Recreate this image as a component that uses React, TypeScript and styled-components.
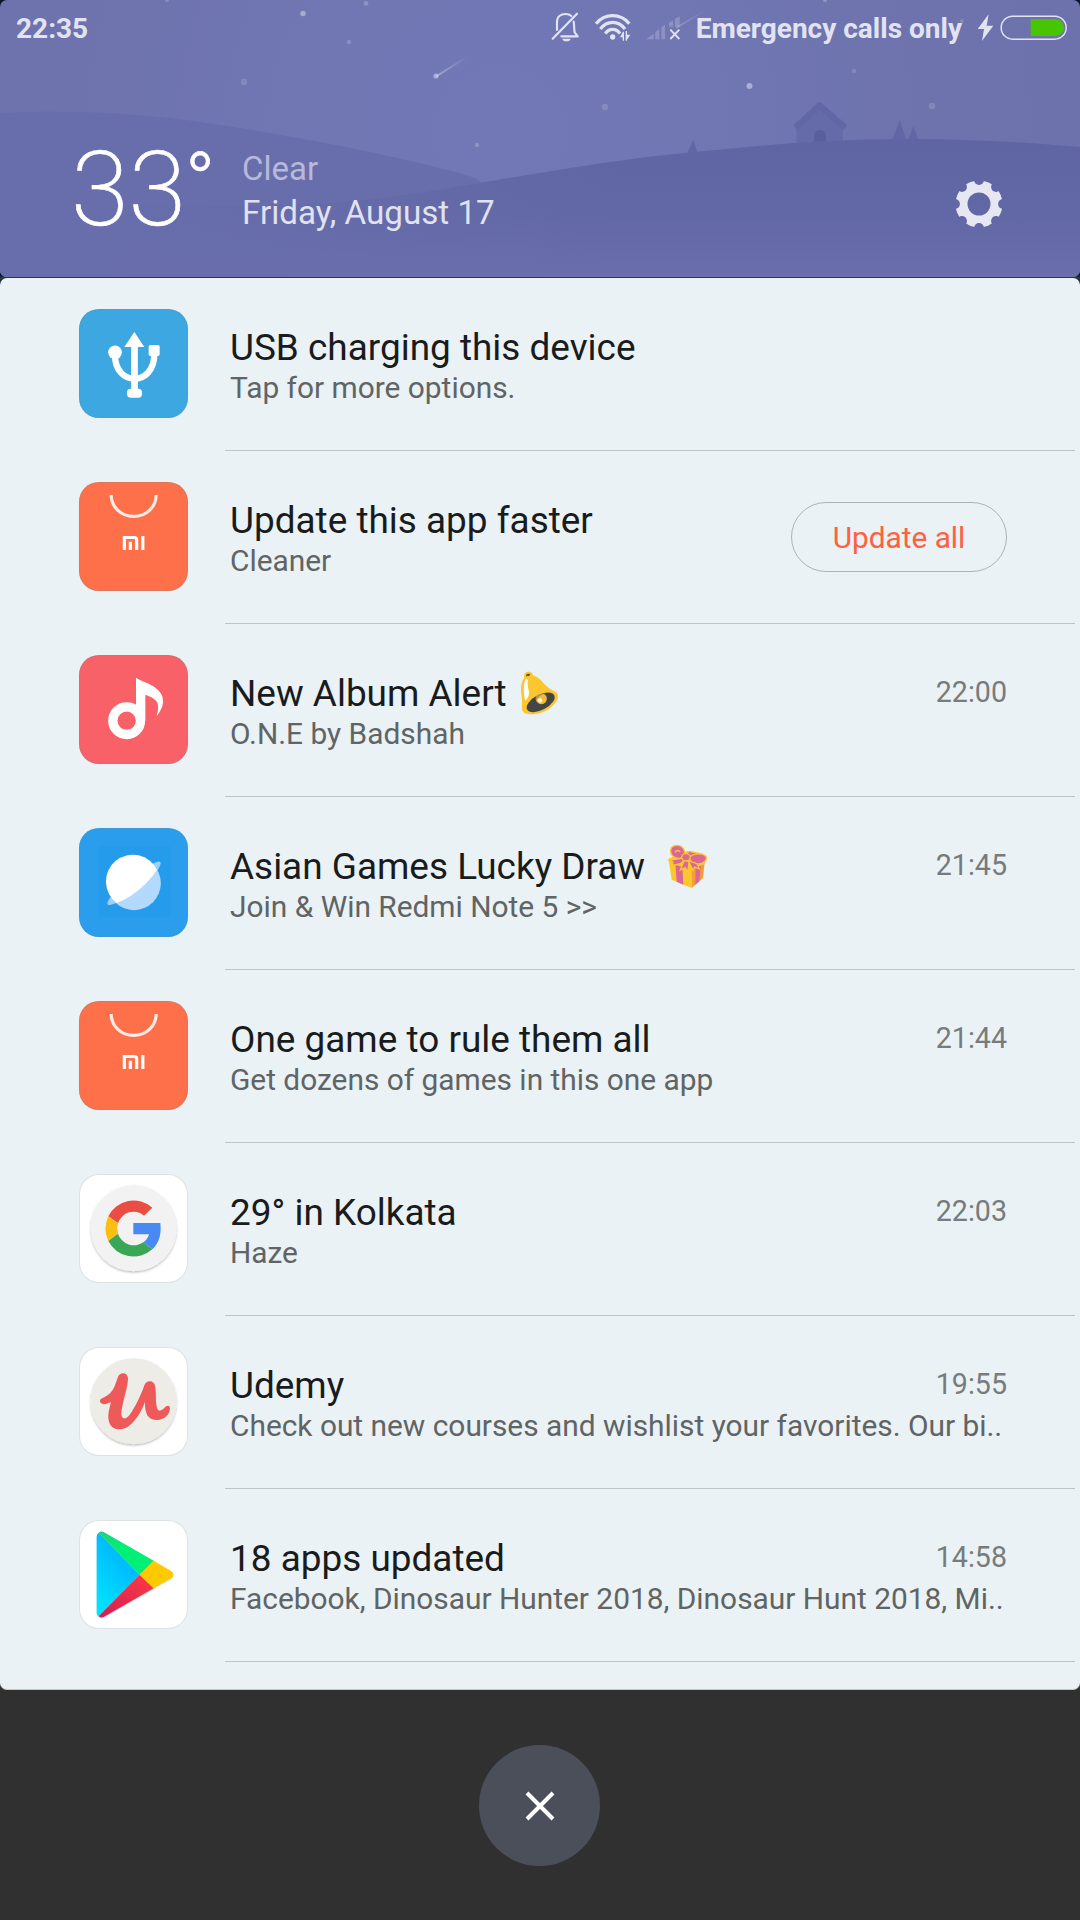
import React from "react";
import styled, { createGlobalStyle } from "styled-components";

const GlobalStyle = createGlobalStyle`
  * { box-sizing: border-box; }
  body {
    margin: 0;
    background: #303030;
    font-family: Roboto, "Liberation Sans", sans-serif;
  }
  svg { display: block; flex: none; }
`;

const Screen = styled.div`
  width: 1080px;
  height: 1920px;
  display: flex;
  flex-direction: column;
  overflow: hidden;
  background: #303030;
`;

const Shade = styled.div`
  flex: none;
  display: flex;
  flex-direction: column;
  gap: 1px;
  background: linear-gradient(#07152e 0, #07152e 276px, #2b3b48 277px, #07152e 288px, #303030 400px);
`;

const Header = styled.header`
  position: relative;
  height: 277px;
  border-radius: 7px;
  overflow: hidden;
  background: radial-gradient(circle at 500px 130px, #7278b6 0, #7077b3 180px, #6e73ad 420px, #6d72ac 100%);
`;

const SceneLayer = styled.svg`
  position: absolute;
  inset: 0;
`;

const StatusBar = styled.div`
  position: relative;
  display: flex;
  justify-content: space-between;
  height: 45px;
  padding: 12px 13px 0 16px;
`;

const StatusText = styled.span`
  font-size: 28px;
  font-weight: 700;
  line-height: 33px;
  color: #e2e3f0;
  white-space: nowrap;
`;

const StatusGroup = styled.div`
  display: flex;
  align-items: flex-start;
`;

const StatusGlyph = styled.svg<{ $after: number }>`
  margin-right: ${(p) => p.$after}px;
`;

const Operator = styled(StatusText)`
  margin-right: 15px;
`;

const Weather = styled.div`
  position: relative;
  display: flex;
  align-items: flex-start;
  height: 232px;
  padding: 0 77px 0 71px;
`;

const Temperature = styled.div`
  display: flex;
  align-items: flex-start;
  width: 171px;
  padding-top: 83px;
  color: #fff;
  font-size: 104.5px;
  font-weight: 200;
  line-height: 123px;
  -webkit-text-stroke: 0.6px #fff;
`;

const Degree = styled.span`
  margin: 7px 0 0 -1px;
  font-size: 80px;
  font-weight: 300;
  line-height: 94px;
`;

const Conditions = styled.div`
  display: flex;
  flex-direction: column;
  gap: 5px;
  padding-top: 104px;
  line-height: 39px;
  font-size: 33.2px;
`;

const Sky = styled.span`
  font-size: 33px;
  color: #b7b9da;
`;

const Today = styled.span`
  color: #e1e2f0;
`;

const SettingsButton = styled.button`
  margin: 135px 0 0 auto;
  padding: 0;
  border: 0;
  background: none;
`;

const List = styled.main`
  display: flex;
  flex-direction: column;
  height: 1412px;
  overflow: hidden;
  background: #eaf2f5;
  border-bottom: 1px solid #c3c7ca;
  border-radius: 7px;
`;

const Row = styled.article`
  flex: none;
  display: flex;
  align-items: flex-start;
  height: 172px;
  padding: 0 73px 0 79px;
`;

const Separator = styled.hr`
  flex: none;
  height: 1px;
  margin: 0 5px 0 225px;
  border: 0;
  background: #bcc2c5;
`;

const Tile = styled.div<{ $bg: string }>`
  flex: none;
  width: 109px;
  height: 109px;
  margin-top: 31px;
  border-radius: 20px;
  overflow: hidden;
  background: ${(p) => p.$bg};
  box-shadow: inset 0 0 0 1px rgba(120, 140, 150, 0.25);
`;

const Copy = styled.div`
  flex: 1;
  min-width: 0;
  display: flex;
  flex-direction: column;
  padding: 48px 0 0 42px;
`;

const TitleLine = styled.div`
  display: flex;
  justify-content: space-between;
  height: 44px;
`;

const Title = styled.h2`
  display: flex;
  margin: 0;
  font-size: 36.93px;
  font-weight: 400;
  line-height: 43px;
  color: #191b1c;
  white-space: nowrap;
`;

const Body = styled.p`
  margin: 0;
  font-size: 29.86px;
  line-height: 35px;
  color: #606465;
  white-space: nowrap;
`;

const Time = styled.time`
  padding-top: 3px;
  font-size: 28.6px;
  line-height: 34px;
  color: #777b7c;
`;

const Action = styled.button`
  flex: none;
  width: 216px;
  height: 70px;
  margin-top: 51px;
  padding: 0;
  border: 1px solid #adb2b5;
  border-radius: 35px;
  background: transparent;
  font: 400 29.8px/35px Roboto, "Liberation Sans", sans-serif;
  color: #ff6040;
`;

const EmojiArt = styled.svg<{ $gap: number }>`
  margin: -1px 0 0 ${(p) => p.$gap}px;
  overflow: visible;
`;

const Footer = styled.footer`
  flex: 1;
  display: flex;
  justify-content: center;
  padding: 55px 1px 0 0;
`;

const CloseButton = styled.button`
  display: flex;
  align-items: center;
  justify-content: center;
  width: 121px;
  height: 121px;
  padding: 0;
  border: 0;
  border-radius: 50%;
  background: #4b4f59;
`;

const stars: [number, number, number, number][] = [
  [303, 13.5, 2.8, 0.38],
  [366, 3.5, 2.4, 0.2],
  [349, 42, 2.2, 0.18],
  [244, 82, 3.2, 0.14],
  [477, 145, 2.2, 0.2],
  [167, 0, 2, 0.2],
  [605, 107, 3.2, 0.14],
  [749.5, 86, 3, 0.42],
  [854, 71, 2.2, 0.14],
  [932, 106, 3.2, 0.14],
  [962, 21, 2, 0.16],
  [825, 0, 2, 0.25],
];

function Scene() {
  return (
    <SceneLayer width="1080" height="277" viewBox="0 0 1080 277">
      <defs>
        <linearGradient id="front" x1="0" y1="139" x2="0" y2="277" gradientUnits="userSpaceOnUse">
          <stop offset="0" stopColor="#5f65a2" />
          <stop offset="0.55" stopColor="#6267a5" />
          <stop offset="1" stopColor="#6a6eac" />
        </linearGradient>
        <linearGradient id="frontFade" x1="0" y1="0" x2="620" y2="0" gradientUnits="userSpaceOnUse">
          <stop offset="0.15" stopColor="#686dab" />
          <stop offset="1" stopColor="#686dab" stopOpacity="0" />
        </linearGradient>
        <linearGradient id="tail" x1="437" y1="76" x2="467" y2="57" gradientUnits="userSpaceOnUse">
          <stop offset="0" stopColor="#fff" stopOpacity="0.35" />
          <stop offset="1" stopColor="#fff" stopOpacity="0" />
        </linearGradient>
        <linearGradient id="tail2" x1="677" y1="27" x2="705" y2="10" gradientUnits="userSpaceOnUse">
          <stop offset="0" stopColor="#fff" stopOpacity="0.22" />
          <stop offset="1" stopColor="#fff" stopOpacity="0" />
        </linearGradient>
      </defs>
      {stars.map(([x, y, r, o]) => (
        <circle key={`${x}-${y}`} cx={x} cy={y} r={r} fill="#fff" opacity={o} />
      ))}
      <path d="M436 76.500L467 57" stroke="url(#tail)" strokeWidth="2" />
      <circle cx="436" cy="76" r="2.600" fill="#fff" opacity="0.4" />
      <path d="M676 28L706 10" stroke="url(#tail2)" strokeWidth="2" />
      <path d="M0 113.500C60 109 140 113 200 122C300 137 400 156 472 177Q480 180 482 184L482 277H0Z" fill="#686dab" />
      <g fill="#6166a4">
        <path d="M687 153L693.500 140L697.500 153Z" />
        <path d="M892 140L900 120L906 140Z" />
        <path d="M908 140L913.500 126L918 140Z" />
        <path d="M796.500 144V127L820 108L843 127V144Z" fill="#656aa8" />
        <path d="M819.500 101.500L847 125L843.500 130L819.500 110L797 130L793.500 125Z" />
        <path d="M814 143V136Q814 130 820 130Q826 130 826 136V143Z" fill="#595f9d" />
      </g>
      <path
        d="M0 207C160 207 240 207 300 205C400 200 450 187 540 173C600 163 640 157 695 152C760 146 820 139 905 139C980 139 1030 143 1080 147V277H0Z"
        fill="url(#front)"
      />
      <path
        d="M0 207C160 207 240 207 300 205C400 200 450 187 540 173C570 168 595 164 620 161V277H0Z"
        fill="url(#frontFade)"
      />
    </SceneLayer>
  );
}

const INK = "#e2e3f0";

function BellOff() {
  return (
    <StatusGlyph $after={14} width="29" height="30" viewBox="33 36 87 90">
      <g fill="none" stroke={INK} strokeWidth="6.500" strokeLinecap="round" strokeLinejoin="round">
        <path d="M51 90V66C51 50 62 42 77 42C84 42 90 44 94 48" />
        <path d="M101 65C103 74 102 90 104 97L113 109H64" />
        <path d="M111 41L38 116" />
      </g>
      <path d="M67 116H92Q90 124 79.500 124Q69 124 67 116Z" fill={INK} />
    </StatusGlyph>
  );
}

function Wifi() {
  return (
    <StatusGlyph $after={13} width="38" height="30" viewBox="162 36 114 90">
      <g fill="none" stroke={INK} strokeWidth="9.500">
        <path d="M168 71Q188 47 218 47Q248 47 268 71" />
        <path d="M181 87Q196 67 218 67Q240 67 255 87" />
        <path d="M196 101Q204 88 218 88Q232 88 240 101" />
      </g>
      <circle cx="218" cy="111" r="8" fill={INK} />
      <path d="M240 112L249 95H252V122H248V112ZM257 93H261V104H271L261 119V122H257Z" fill={INK} />
    </StatusGlyph>
  );
}

function NoSignal() {
  return (
    <StatusGlyph $after={14.7} width="36" height="30" viewBox="315 36 108 90">
      <g fill="#fff" opacity="0.2">
        <path d="M318 118L341 101V118Z" />
        <path d="M346 96L358 87V118H346Z" />
        <path d="M364 82L375 74V118H364Z" />
        <path d="M387 68L399 61V80H387Z" />
        <path d="M405 56L419 49V80H405Z" />
      </g>
      <path d="M391 89L418 117M418 89L391 117" stroke={INK} strokeWidth="5.500" />
    </StatusGlyph>
  );
}

function Bolt() {
  return (
    <StatusGlyph $after={6} width="17" height="30" viewBox="501 36 51 90">
      <path d="M536 43L503 87H522L516 123L550 77H530Z" fill={INK} />
    </StatusGlyph>
  );
}

function Battery() {
  return (
    <StatusGlyph $after={0} width="67" height="30" viewBox="570 36 201 90">
      <rect x="573.500" y="48.500" width="195" height="69" rx="34.500" fill="none" stroke={INK} strokeWidth="4.500" />
      <path d="M662 57H738Q762 60 762 82.500Q762 105 738 108H662Z" fill="#48c400" />
    </StatusGlyph>
  );
}

function Gear() {
  const notches = Array.from({ length: 8 }, (_, i) => (i * Math.PI) / 4);
  return (
    <svg width="48" height="48" viewBox="-24 -24 48 48">
      <mask id="gearCut">
        <rect x="-24" y="-24" width="48" height="48" fill="#fff" />
        <circle r="11.500" fill="#000" />
        {notches.map((a) => (
          <circle key={a} cx={24 * Math.cos(a)} cy={24 * Math.sin(a)} r="4.900" fill="#000" />
        ))}
      </mask>
      <circle r="23.500" fill="#e6e7f2" mask="url(#gearCut)" />
    </svg>
  );
}

function UsbIcon() {
  return (
    <svg width="109" height="109" viewBox="57 57 327 327">
      <g fill="#fff">
        <path d="M223 126L253 171H193Z" />
        <rect x="213.500" y="165" width="20" height="140" />
        <rect x="201" y="296" width="45" height="27" rx="11" />
        <circle cx="165" cy="187" r="20.500" />
        <rect x="266" y="165" width="33" height="33" rx="5" />
      </g>
      <path d="M165 196C165 240 192 266 223 266C255 266 283 240 283 192" fill="none" stroke="#fff" strokeWidth="19" />
    </svg>
  );
}

function StoreIcon() {
  return (
    <svg width="109" height="109" viewBox="57 576 327 327">
      <path d="M153.500 615C154 652 184 679 221 679C258 679 288 652 288.500 615" fill="none" stroke="#ffece6" strokeWidth="9.500" />
      <g fill="none" stroke="#fff" strokeWidth="9.500">
        <path d="M193 780V742.500H222Q230 742.500 230 750V780" />
        <path d="M211 755V780M248.500 738V780" />
      </g>
    </svg>
  );
}

function MusicIcon() {
  return (
    <svg width="109" height="109" viewBox="57 44 327 327">
      <circle cx="200" cy="241" r="41.500" fill="none" stroke="#fff" strokeWidth="28" />
      <path
        d="M228 112C240 121 262 126 280 138C300 151 310 166 309 184C308 202 300 214 290 228C295 210 297 194 289 182C281 172 268 168 256 163V241H228Z"
        fill="#fff"
      />
    </svg>
  );
}

function BrowserIcon() {
  return (
    <svg width="109" height="109" viewBox="57 562 327 327">
      <rect x="114" y="616" width="216" height="212" fill="#1f9cec" opacity="0.4" />
      <path d="M276 670Q301 656 302 667Q301 678 290 692Z" fill="#9dcffb" />
      <path d="M154 766Q138 787 144 792Q153 796 172 785Z" fill="#9dcffb" />
      <circle cx="222" cy="728" r="80.500" fill="#b3dafe" />
      <path d="M291 688C265 726 222 768 170 787A80.500 80.500 0 1 1 291 688Z" fill="#fff" />
    </svg>
  );
}

function GoogleIcon() {
  return (
    <svg width="109" height="109" viewBox="57 582 327 327">
      <defs>
        <filter id="discShadow" x="-10%" y="-10%" width="120%" height="125%">
          <feDropShadow dx="0" dy="4" stdDeviation="2.500" floodColor="#000" floodOpacity="0.28" />
        </filter>
      </defs>
      <circle cx="221" cy="745" r="129" fill="#f2f2f2" filter="url(#discShadow)" />
      <path d="M145 709A85 86 0 0 1 277 683L252 707A49 51 0 0 0 174 730Z" fill="#ea4e43" />
      <path d="M145 709A85 86 0 0 0 145 783L174 761A50 50 0 0 1 174 730Z" fill="#fbbf14" />
      <path d="M145 783A85 86 0 0 0 277 808L250 787A50 51 0 0 1 174 761Z" fill="#3aa757" />
      <path d="M220 729H301Q307 780 277 808L250 787Q263 778 267 763H220Z" fill="#4889f4" />
    </svg>
  );
}

function UdemyIcon() {
  return (
    <svg width="109" height="109" viewBox="57 51 327 327">
      <circle cx="221" cy="214" r="129" fill="#edece7" filter="url(#discShadow)" />
      <path
        d="M120 211C124 202 142 203 158 180C166 167 170 150 174 140C179 126 204 124 204 147C203 175 185 225 184 250C184 270 198 269 208 256C225 234 245 190 252 169C257 148 284 149 286 171C289 191 286 215 291 233C294 245 305 243 313 234C320 226 329 224 330 235C330 254 312 270 291 270C265 270 254 253 255 215C246 243 228 269 209 286C191 303 156 303 148 278C141 258 148 236 153 217C143 219 136 225 128 222C122 220 119 216 120 211Z"
        fill="#ee5a59"
      />
    </svg>
  );
}

function PlayIcon() {
  return (
    <svg width="109" height="109" viewBox="57 570 327 327">
      <defs>
        <linearGradient id="playBlue" x1="0.8" y1="0" x2="0.2" y2="1">
          <stop offset="0" stopColor="#00a8ff" />
          <stop offset="1" stopColor="#00e4ff" />
        </linearGradient>
        <linearGradient id="playRed" x1="1" y1="0" x2="0" y2="1">
          <stop offset="0" stopColor="#ff3a44" />
          <stop offset="1" stopColor="#cf1f55" />
        </linearGradient>
        <linearGradient id="playGreen" x1="0" y1="0" x2="1" y2="1">
          <stop offset="0" stopColor="#1fd07f" />
          <stop offset="0.4" stopColor="#00f076" />
        </linearGradient>
        <filter id="playShadow">
          <feDropShadow dx="0" dy="2" stdDeviation="1.500" floodColor="#000" floodOpacity="0.25" />
        </filter>
      </defs>
      <g filter="url(#playShadow)">
        <path d="M116 608Q110 612 110 620V848Q110 856 116 859L239 734Z" fill="url(#playBlue)" />
        <path d="M116 608Q122 602 132 607L281 692L239 734Z" fill="url(#playGreen)" />
        <path d="M116 859Q122 865 132 860L281 775L239 734Z" fill="url(#playRed)" />
        <path d="M281 692L333 723Q348 734 333 745L281 775L239 734Z" fill="#fec903" />
      </g>
    </svg>
  );
}

function BellEmoji() {
  return (
    <EmojiArt $gap={13} width="39" height="44" viewBox="60 34 117 132" role="img" aria-label="bell">
      <path
        d="M73 53C70 41 80 35 90 37C97 38 99 43 98 47C126 54 130 80 160 93C175 99 177 110 171 121C158 147 122 166 92 164C70 163 64 155 66 140C69 115 60 96 64 76C66 64 71 60 73 53Z"
        fill="#fcc62e"
      />
      <path d="M78 46Q84 39 91 44L87 50Q83 46 80 51Z" fill="#5a5236" />
      <path d="M77 58C70 72 70 104 76 123C84 116 89 106 86 92C83 80 82 70 84 60Z" fill="#fff" />
      <ellipse cx="122" cy="128" rx="46" ry="23" transform="rotate(-28 122 128)" fill="#444546" />
      <circle cx="124" cy="117" r="16.500" fill="#f4bd35" />
      <path d="M106 118C108 106 120 100 137 103C124 104 114 110 109 121Z" fill="#a98a6a" />
      <circle cx="120" cy="122" r="6.500" fill="#fffbe8" />
    </EmojiArt>
  );
}

function GiftEmoji() {
  return (
    <EmojiArt $gap={21.5} width="41" height="45" viewBox="500 552 123 135" role="img" aria-label="gift">
      <path d="M506 606L514 659L574 684L573 622Z" fill="#fcc62e" />
      <path d="M573 622L574 684L608 654L613 606Z" fill="#f79a3c" />
      <path d="M525 612L529 665L549 674L546 617Z" fill="#db6795" />
      <path d="M586 620L585 674L597 664L602 612Z" fill="#db6795" />
      <path d="M504 596L560 573L619 592L613 612L573 628L506 610Z" fill="#fcc62e" />
      <g fill="#db6795" stroke="#fcc62e" strokeWidth="4">
        <path d="M548 584L567 574L594 580L572 592Z" />
        <path d="M550 592C532 602 509 590 511 570C514 553 540 552 549 566C554 573 554 582 550 592Z" />
        <path d="M566 594C575 580 604 577 616 588C624 598 609 612 594 612C580 612 568 604 566 594Z" />
        <path d="M546 594L507 601L518 607L516 616L540 611L553 601Z" />
        <path d="M552 600L540 630L554 623L563 634L566 603Z" />
        <path d="M564 602L578 631L583 621L597 627L590 611Z" />
        <ellipse cx="557" cy="592" rx="13" ry="11" />
      </g>
      <path d="M524 577Q530 567 540 575" fill="none" stroke="#fcc62e" strokeWidth="4" />
    </EmojiArt>
  );
}

type Notice = {
  title: string;
  body: string;
  tile: string;
  icon: React.ReactNode;
  emoji?: React.ReactNode;
  time?: string;
  action?: string;
};

const notices: Notice[] = [
  { title: "USB charging this device", body: "Tap for more options.", tile: "#3ca7e0", icon: <UsbIcon /> },
  { title: "Update this app faster", body: "Cleaner", tile: "#fe7049", icon: <StoreIcon />, action: "Update all" },
  { title: "New Album Alert", body: "O.N.E by Badshah", tile: "#f96168", icon: <MusicIcon />, emoji: <BellEmoji />, time: "22:00" },
  { title: "Asian Games Lucky Draw", body: "Join & Win Redmi Note 5 >>", tile: "#2a9dec", icon: <BrowserIcon />, emoji: <GiftEmoji />, time: "21:45" },
  { title: "One game to rule them all", body: "Get dozens of games in this one app", tile: "#fe7049", icon: <StoreIcon />, time: "21:44" },
  { title: "29° in Kolkata", body: "Haze", tile: "#ffffff", icon: <GoogleIcon />, time: "22:03" },
  { title: "Udemy", body: "Check out new courses and wishlist your favorites. Our bi..", tile: "#ffffff", icon: <UdemyIcon />, time: "19:55" },
  { title: "18 apps updated", body: "Facebook, Dinosaur Hunter 2018, Dinosaur Hunt 2018, Mi..", tile: "#ffffff", icon: <PlayIcon />, time: "14:58" },
];

export default function App() {
  return (
    <Screen>
      <GlobalStyle />
      <Shade>
        <Header>
          <Scene />
          <StatusBar>
            <StatusText>22:35</StatusText>
            <StatusGroup>
              <BellOff />
              <Wifi />
              <NoSignal />
              <Operator>Emergency calls only</Operator>
              <Bolt />
              <Battery />
            </StatusGroup>
          </StatusBar>
          <Weather>
            <Temperature>
              33<Degree>°</Degree>
            </Temperature>
            <Conditions>
              <Sky>Clear</Sky>
              <Today>Friday, August 17</Today>
            </Conditions>
            <SettingsButton aria-label="Settings">
              <Gear />
            </SettingsButton>
          </Weather>
        </Header>
        <List>
          {notices.map((n) => (
            <React.Fragment key={n.title}>
              <Row>
                <Tile $bg={n.tile}>{n.icon}</Tile>
                <Copy>
                  <TitleLine>
                    <Title>
                      {n.title}
                      {n.emoji}
                    </Title>
                    {n.time && <Time>{n.time}</Time>}
                  </TitleLine>
                  <Body>{n.body}</Body>
                </Copy>
                {n.action && <Action>{n.action}</Action>}
              </Row>
              <Separator />
            </React.Fragment>
          ))}
        </List>
      </Shade>
      <Footer>
        <CloseButton aria-label="Close">
          <svg width="32" height="32" viewBox="0 0 32 32">
            <path d="M3 3L29 29M29 3L3 29" stroke="#fff" strokeWidth="4" />
          </svg>
        </CloseButton>
      </Footer>
    </Screen>
  );
}
